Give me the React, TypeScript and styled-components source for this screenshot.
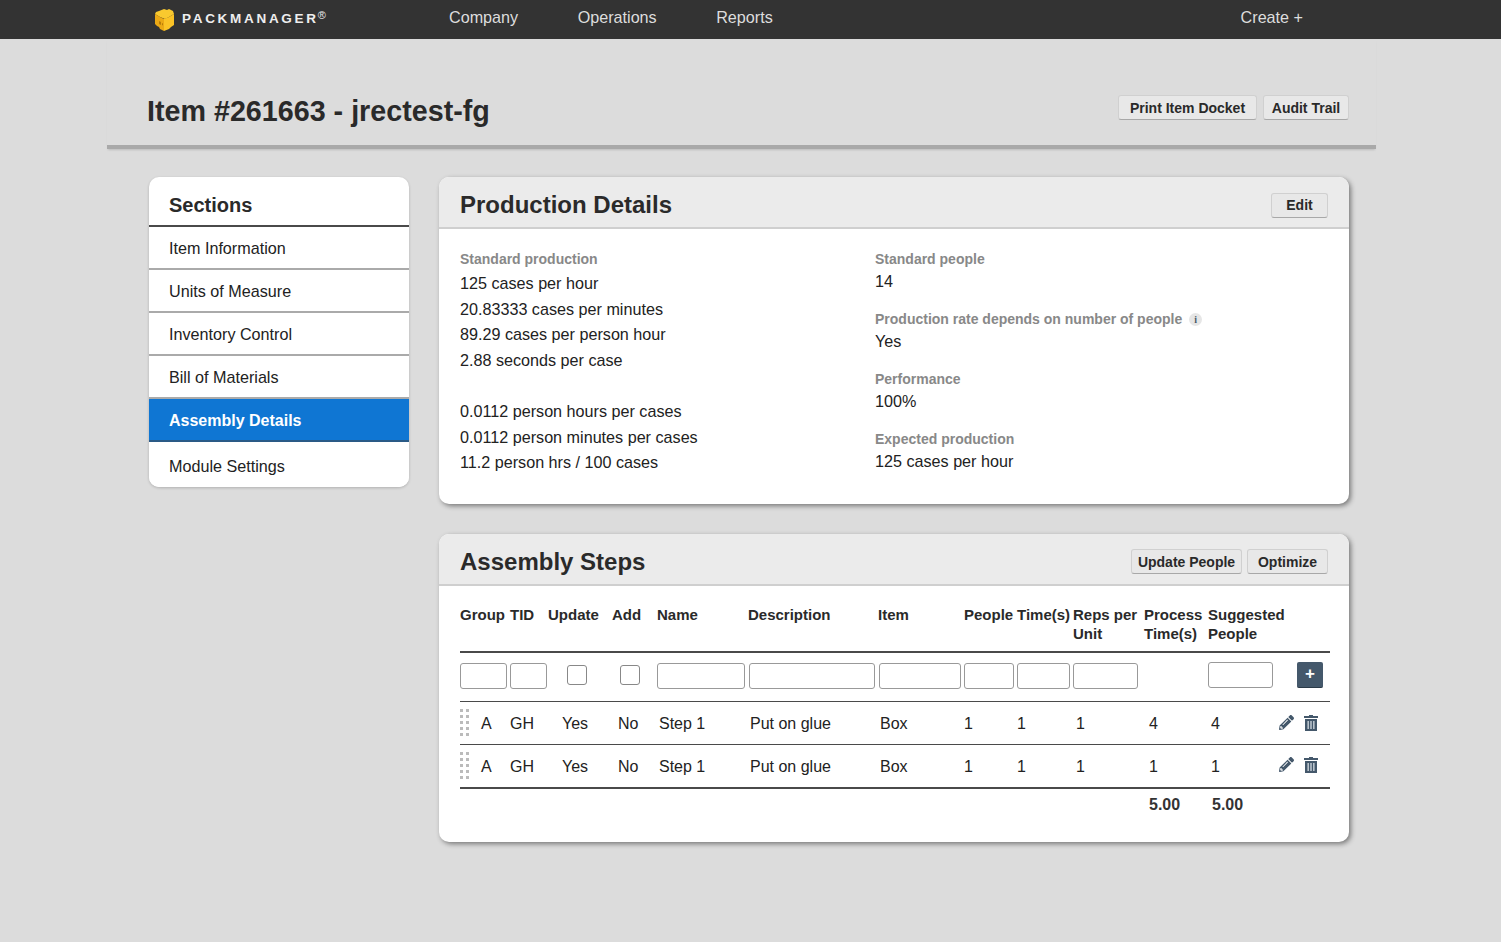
import React from 'react';
import styled, { createGlobalStyle } from 'styled-components';
import { FaPencilAlt } from 'react-icons/fa';

const GlobalStyle = createGlobalStyle`
  html, body {
    margin: 0;
    padding: 0;
    background: #dcdcdc;
    font-family: "Liberation Sans", Arial, sans-serif;
    color: #222;
  }
  * {
    box-sizing: border-box;
  }
`;

const Page = styled.div`
  min-height: 942px;
  background: #dcdcdc;
`;

const TopBar = styled.header`
  height: 39px;
  background: #333;
  display: flex;
  align-items: center;
  padding: 0 198px 0 154px;
  overflow: hidden;
`;

const Logo = styled.div`
  display: flex;
  align-items: center;
  width: 295px;
  gap: 7px;
`;

const LogoText = styled.span`
  color: #eee;
  font-size: 13.5px;
  font-weight: 700;
  letter-spacing: 2.7px;
  margin-top: -3px;
`;

const LogoMark = styled.sup`
  font-size: 11px;
  font-weight: 400;
  letter-spacing: 0;
  margin-left: -1px;
  vertical-align: 4px;
  line-height: 0;
`;

const NavLink = styled.a<{ $push?: boolean }>`
  color: #ddd;
  font-size: 16.17px;
  margin-right: ${p => (p.$push ? 0 : '59.5px')};
  margin-left: ${p => (p.$push ? 'auto' : 0)};
  margin-top: -4px;
`;

const TitleBar = styled.div`
  height: 110px;
  margin: 0 125px 0 107px;
  padding: 56px 27px 0 40px;
  display: flex;
  justify-content: space-between;
  align-items: flex-start;
  border-bottom: 4px solid #a9a9a9;
  box-shadow: 0 2px 2px -1px rgba(0, 0, 0, 0.15);
`;

const PageTitle = styled.h1`
  margin: 0;
  font-size: 28.7px;
  line-height: 32px;
  font-weight: 700;
  color: #2a2a2a;
`;

const ButtonRow = styled.div<{ $gap: number }>`
  display: flex;
  gap: ${p => p.$gap}px;
`;

const Button = styled.button<{ $width: number }>`
  width: ${p => p.$width}px;
  height: 25px;
  padding: 0;
  background: #e8e8e8;
  border: 1px solid #d0d0d0;
  border-bottom: 1px solid #a8a8a8;
  border-radius: 3px;
  font-family: inherit;
  font-size: 14px;
  font-weight: 700;
  color: #2a2a2a;
`;

const Main = styled.main`
  display: flex;
  gap: 30px;
  padding: 28px 0 0 149px;
`;

const Sidebar = styled.nav`
  width: 260px;
  height: 310px;
  background: #fff;
  border-radius: 10px;
  box-shadow: 0 1px 3px rgba(0, 0, 0, 0.2);
  overflow: hidden;
`;

const SidebarTitle = styled.h3`
  margin: 0;
  height: 50px;
  padding: 16px 20px 0;
  font-size: 20px;
  line-height: 24px;
  font-weight: 700;
  color: #2a2a2a;
  border-bottom: 2px solid #4a4a4a;
`;

const SidebarItem = styled.div<{ $active?: boolean; $last?: boolean }>`
  height: ${p => (p.$last ? '45px' : '43px')};
  display: flex;
  align-items: center;
  padding: ${p => (p.$last ? '3px' : '2px')} 20px 0;
  font-size: ${p => (p.$active ? '16px' : '16.17px')};
  font-weight: ${p => (p.$active ? 700 : 400)};
  color: ${p => (p.$active ? '#fff' : '#222')};
  background: ${p => (p.$active ? '#0f76d3' : '#fff')};
  border-bottom: ${p => (p.$last ? 'none' : p.$active ? '2px solid #2a5a86' : '2px solid #aaa')};
`;

const Column = styled.div`
  width: 910px;
  display: flex;
  flex-direction: column;
  gap: 30px;
`;

const Panel = styled.section`
  background: #fff;
  border-radius: 10px;
  box-shadow: 2px 2px 5px rgba(0, 0, 0, 0.45);
  overflow: hidden;
`;

const PanelHeader = styled.div`
  height: 52px;
  display: flex;
  align-items: center;
  justify-content: space-between;
  padding: 6px 21px 0;
  background: #ebebeb;
  border-bottom: 2px solid #cfcfcf;
`;

const PanelTitle = styled.h2`
  margin: 0;
  font-size: 24px;
  font-weight: 700;
  color: #2a2a2a;
`;

const DetailsBody = styled.div`
  display: flex;
  padding: 22px 21px 28px;
`;

const DetailsLeft = styled.div`
  width: 415px;
`;

const Label = styled.div`
  display: flex;
  align-items: center;
  gap: 7px;
  font-size: 14px;
  line-height: 17px;
  font-weight: 700;
  color: #888;
`;

const RateLines = styled.div`
  margin-top: 3px;
  font-size: 16.17px;
  line-height: 25.6px;
`;

const Gap = styled.div`
  height: 25.6px;
`;

const Field = styled.div`
  margin-bottom: 17px;

  &:last-child {
    margin-bottom: 0;
  }
`;

const Value = styled.div`
  margin-top: 1px;
  font-size: 16.17px;
  line-height: 25px;
`;

const InfoDot = styled.span`
  width: 13px;
  height: 13px;
  border-radius: 50%;
  background: #e6e6e6;
  color: #4a5a68;
  font-family: "Liberation Serif", serif;
  font-size: 10px;
  font-weight: 700;
  line-height: 13px;
  text-align: center;
`;

const StepsBody = styled.div`
  padding: 19px 19px 28px 21px;
`;

const Table = styled.table`
  width: 870px;
  table-layout: fixed;
  border-collapse: separate;
  border-spacing: 0;
`;

const Th = styled.th`
  height: 47px;
  padding: 0 0 8px;
  text-align: left;
  vertical-align: top;
  font-size: 15px;
  line-height: 19px;
  font-weight: 700;
  color: #2a2a2a;
  border-bottom: 2px solid #4a4a4a;
`;

const FilterCell = styled.td`
  height: 49px;
  padding: 0 0 2px;
  border-bottom: 1px solid #4a4a4a;
  vertical-align: middle;
`;

const TextFilter = styled.input<{ $width: number; $left?: number; $raised?: boolean }>`
  display: block;
  width: ${p => p.$width}px;
  height: 26px;
  margin: ${p => (p.$raised ? '-1px' : '0')} 0 ${p => (p.$raised ? '1px' : '0')} ${p => p.$left ?? 0}px;
  padding: 0;
  background: #fff;
  border: 1px solid #999;
  border-radius: 3px;
`;

const CheckFilter = styled.span<{ $left: number }>`
  display: block;
  width: 20px;
  height: 20px;
  margin: -1px 0 1px ${p => p.$left}px;
  background: #fff;
  border: 1px solid #888;
  border-radius: 3px;
`;

const AddButton = styled.button`
  display: flex;
  align-items: center;
  justify-content: center;
  width: 26px;
  height: 26px;
  margin: -1px 0 1px 24px;
  padding: 0;
  background: #44586b;
  border: none;
  border-bottom: 1px solid #2a3a48;
  border-radius: 2px;
  color: #fff;
  font-family: inherit;
  font-size: 17px;
  font-weight: 700;
`;

const Td = styled.td<{ $pad?: number; $end?: boolean }>`
  height: ${p => (p.$end ? '44px' : '43px')};
  padding: 2px 0 0 ${p => p.$pad ?? 0}px;
  font-size: 16px;
  color: #222;
  vertical-align: middle;
  border-bottom: ${p => (p.$end ? '2px solid #4a4a4a' : '1px solid #4a4a4a')};
`;

const GroupCell = styled.div`
  display: flex;
  align-items: center;
  gap: 11px;
`;

const DragHandle = styled.span`
  width: 10px;
  height: 28px;
  margin-top: -1px;
  background-image: linear-gradient(#bbb, #bbb), linear-gradient(#bbb, #bbb);
  background-size: 3px 3px;
  background-position: 0 0, 6px 0;
  background-repeat: repeat-y;
  -webkit-mask: repeating-linear-gradient(#000 0 3px, transparent 3px 6px);
  mask: repeating-linear-gradient(#000 0 3px, transparent 3px 6px);
`;

const ActionIcons = styled.div<{ $end?: boolean }>`
  display: flex;
  align-items: center;
  gap: 10px;
  margin-top: ${p => (p.$end ? '-4px' : '-2px')};
  padding-left: 6px;
  color: #44586b;
`;

const TotalCell = styled.td<{ $pad: number }>`
  padding: 6px 0 0 ${p => p.$pad}px;
  font-size: 16px;
  line-height: 19px;
  font-weight: 700;
  color: #333;
`;

const TrashIcon = () => (
  <svg width="14" height="16" viewBox="0 0 14 16" aria-hidden="true">
    <path fill="currentColor" d="M5 0h4v1h5v2H0V1h5zM1 4h12v12H1z" />
    <path fill="#b9c3cc" d="M3.4 6h1.6v8H3.4zM6.2 6h1.6v8H6.2zM9 6h1.6v8H9z" />
  </svg>
);

const CubeLogo = () => (
  <svg width="21" height="22" viewBox="0 0 21 22" aria-hidden="true">
    <path fill="#f9c92f" d="M10 0l3 1 2-1 4 2 1 3-5 3-4 2-5-2-5-3 1-2 3-1z" />
    <path fill="#eba915" d="M1 5l5 3 4 2v12l-4-2-1-2-2-1-2-2z" />
    <path fill="#fbc326" d="M10 10l5-2 5-3v11l-3 2-2 2-5 2z" />
    <path fill="#b77c0a" d="M5 12l2 1v3l-2-1zM8 14l1 .5v2l-1-.5z" />
  </svg>
);

const sections = ['Item Information', 'Units of Measure', 'Inventory Control', 'Bill of Materials'];

const columns = [50, 38, 64, 45, 91, 130, 86, 53, 56, 71, 64, 65, 57];

const headers: [string, number?][] = [
  ['Group'], ['TID'], ['Update'], ['Add'], ['Name'], ['Description'], ['Item'],
  ['People'], ['Time(s)'], ['Reps per Unit'], ['Process Time(s)'], ['Suggested People', 2],
];

const stepRows = [
  { process: '4', suggested: '4', end: false },
  { process: '1', suggested: '1', end: true },
];

const App: React.FC = () => (
  <Page>
    <GlobalStyle />
    <TopBar>
      <Logo>
        <CubeLogo />
        <LogoText>PACKMANAGER<LogoMark>®</LogoMark></LogoText>
      </Logo>
      <NavLink>Company</NavLink>
      <NavLink>Operations</NavLink>
      <NavLink>Reports</NavLink>
      <NavLink $push>Create +</NavLink>
    </TopBar>

    <TitleBar>
      <PageTitle>Item #261663 - jrectest-fg</PageTitle>
      <ButtonRow $gap={6}>
        <Button $width={139}>Print Item Docket</Button>
        <Button $width={86}>Audit Trail</Button>
      </ButtonRow>
    </TitleBar>

    <Main>
      <Sidebar>
        <SidebarTitle>Sections</SidebarTitle>
        {sections.map(name => (
          <SidebarItem key={name}>{name}</SidebarItem>
        ))}
        <SidebarItem $active>Assembly Details</SidebarItem>
        <SidebarItem $last>Module Settings</SidebarItem>
      </Sidebar>

      <Column>
        <Panel>
          <PanelHeader>
            <PanelTitle>Production Details</PanelTitle>
            <Button $width={57}>Edit</Button>
          </PanelHeader>
          <DetailsBody>
            <DetailsLeft>
              <Label>Standard production</Label>
              <RateLines>
                <div>125 cases per hour</div>
                <div>20.83333 cases per minutes</div>
                <div>89.29 cases per person hour</div>
                <div>2.88 seconds per case</div>
                <Gap />
                <div>0.0112 person hours per cases</div>
                <div>0.0112 person minutes per cases</div>
                <div>11.2 person hrs / 100 cases</div>
              </RateLines>
            </DetailsLeft>
            <div>
              <Field>
                <Label>Standard people</Label>
                <Value>14</Value>
              </Field>
              <Field>
                <Label>Production rate depends on number of people <InfoDot>i</InfoDot></Label>
                <Value>Yes</Value>
              </Field>
              <Field>
                <Label>Performance</Label>
                <Value>100%</Value>
              </Field>
              <Field>
                <Label>Expected production</Label>
                <Value>125 cases per hour</Value>
              </Field>
            </div>
          </DetailsBody>
        </Panel>

        <Panel>
          <PanelHeader>
            <PanelTitle>Assembly Steps</PanelTitle>
            <ButtonRow $gap={5}>
              <Button $width={111}>Update People</Button>
              <Button $width={81}>Optimize</Button>
            </ButtonRow>
          </PanelHeader>
          <StepsBody>
            <Table>
              <colgroup>
                {columns.map((w, i) => (
                  <col key={i} width={w} />
                ))}
              </colgroup>
              <thead>
                <tr>
                  {headers.map(([label, span]) => (
                    <Th key={label} colSpan={span}>{label}</Th>
                  ))}
                </tr>
              </thead>
              <tbody>
                <tr>
                  <FilterCell><TextFilter $width={47} /></FilterCell>
                  <FilterCell><TextFilter $width={37} /></FilterCell>
                  <FilterCell><CheckFilter $left={19} /></FilterCell>
                  <FilterCell><CheckFilter $left={8} /></FilterCell>
                  <FilterCell><TextFilter $width={88} /></FilterCell>
                  <FilterCell><TextFilter $width={126} $left={1} /></FilterCell>
                  <FilterCell><TextFilter $width={82} $left={1} /></FilterCell>
                  <FilterCell><TextFilter $width={50} /></FilterCell>
                  <FilterCell><TextFilter $width={53} /></FilterCell>
                  <FilterCell><TextFilter $width={65} /></FilterCell>
                  <FilterCell />
                  <FilterCell><TextFilter $width={65} $raised /></FilterCell>
                  <FilterCell><AddButton>+</AddButton></FilterCell>
                </tr>
                {stepRows.map((row, i) => (
                  <tr key={i}>
                    <Td $end={row.end}>
                      <GroupCell><DragHandle />A</GroupCell>
                    </Td>
                    <Td $end={row.end}>GH</Td>
                    <Td $end={row.end} $pad={14}>Yes</Td>
                    <Td $end={row.end} $pad={6}>No</Td>
                    <Td $end={row.end} $pad={2}>Step 1</Td>
                    <Td $end={row.end} $pad={2}>Put on glue</Td>
                    <Td $end={row.end} $pad={2}>Box</Td>
                    <Td $end={row.end}>1</Td>
                    <Td $end={row.end}>1</Td>
                    <Td $end={row.end} $pad={3}>1</Td>
                    <Td $end={row.end} $pad={5}>{row.process}</Td>
                    <Td $end={row.end} $pad={3}>{row.suggested}</Td>
                    <Td $end={row.end}>
                      <ActionIcons $end={row.end}>
                        <FaPencilAlt size={15} />
                        <TrashIcon />
                      </ActionIcons>
                    </Td>
                  </tr>
                ))}
                <tr>
                  <TotalCell $pad={0} colSpan={10} />
                  <TotalCell $pad={5}>5.00</TotalCell>
                  <TotalCell $pad={4}>5.00</TotalCell>
                  <TotalCell $pad={0} />
                </tr>
              </tbody>
            </Table>
          </StepsBody>
        </Panel>
      </Column>
    </Main>
  </Page>
);

export default App;
